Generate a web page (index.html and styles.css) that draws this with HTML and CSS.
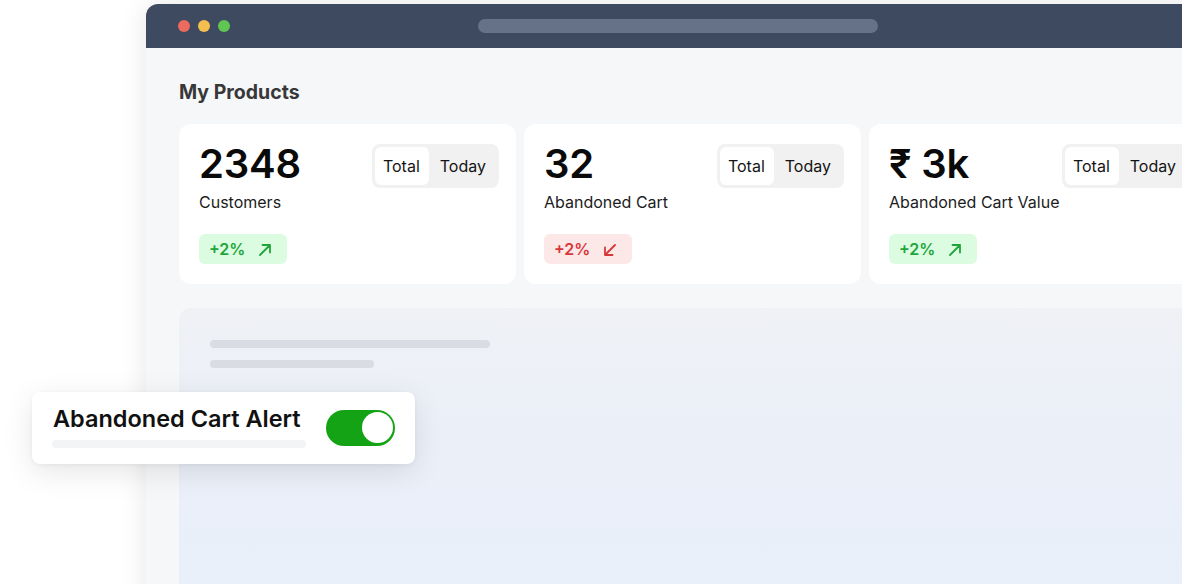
FILE: index.html
```html
<!DOCTYPE html>
<html lang="en">
<head>
<meta charset="utf-8">
<title>My Products</title>
<link rel="stylesheet" href="styles.css">
</head>
<body>
<div class="stage">
  <div class="window">
    <div class="titlebar">
      <div class="dots">
        <span class="dot dot-red"></span>
        <span class="dot dot-yellow"></span>
        <span class="dot dot-green"></span>
      </div>
      <div class="urlbar"></div>
      <div></div>
    </div>
    <div class="content">
      <h1 class="heading">My Products</h1>
      <div class="cards">
        <div class="card">
          <div class="card-top">
            <div class="value">2348</div>
            <div class="switch-group">
              <span class="seg seg-active">Total</span>
              <span class="seg">Today</span>
            </div>
          </div>
          <div class="label">Customers</div>
          <span class="badge badge-up">+2%
            <svg width="14" height="14" viewBox="0 0 14 14" fill="none" stroke="currentColor" stroke-width="1.8" stroke-linecap="round" stroke-linejoin="round"><path d="M2 12L12 2M4.5 2H12v7.5"/></svg>
          </span>
        </div>
        <div class="card">
          <div class="card-top">
            <div class="value">32</div>
            <div class="switch-group">
              <span class="seg seg-active">Total</span>
              <span class="seg">Today</span>
            </div>
          </div>
          <div class="label">Abandoned Cart</div>
          <span class="badge badge-down">+2%
            <svg width="14" height="14" viewBox="0 0 14 14" fill="none" stroke="currentColor" stroke-width="1.8" stroke-linecap="round" stroke-linejoin="round"><path d="M12 2L2 12M2 4.5V12h7.5"/></svg>
          </span>
        </div>
        <div class="card">
          <div class="card-top">
            <div class="value">₹ 3k</div>
            <div class="switch-group">
              <span class="seg seg-active">Total</span>
              <span class="seg">Today</span>
            </div>
          </div>
          <div class="label">Abandoned Cart Value</div>
          <span class="badge badge-up">+2%
            <svg width="14" height="14" viewBox="0 0 14 14" fill="none" stroke="currentColor" stroke-width="1.8" stroke-linecap="round" stroke-linejoin="round"><path d="M2 12L12 2M4.5 2H12v7.5"/></svg>
          </span>
        </div>
      </div>
      <div class="panel">
        <div class="skeleton skeleton-long"></div>
        <div class="skeleton skeleton-short"></div>
      </div>
    </div>
  </div>

  <div class="alert-card">
    <div class="alert-text">
      <div class="alert-title">Abandoned Cart Alert</div>
      <div class="alert-bar"></div>
    </div>
    <div class="toggle"><span class="knob"></span></div>
  </div>
</div>
</body>
</html>
```

FILE: styles.css
```css
* {
  box-sizing: border-box;
}

html, body {
  margin: 0;
  padding: 0;
  background: #ffffff;
  overflow: hidden;
}

body {
  width: 1182px;
  height: 584px;
  font-family: "Inter", "Noto Sans", sans-serif;
}

.stage {
  position: relative;
  width: 1182px;
  height: 584px;
  padding: 4px 0 0 146px;
  overflow: hidden;
}

/* browser window */
.window {
  width: 1120px;
  height: 640px;
  border-radius: 12px;
  overflow: hidden;
  background: #f6f7f9;
  box-shadow: 0 0 28px rgba(0, 0, 0, 0.10);
}

.titlebar {
  height: 44px;
  background: #3e4a5f;
  display: grid;
  grid-template-columns: 300px 400px 1fr;
  align-items: center;
  padding: 0 32px;
}

.dots {
  display: flex;
  gap: 8px;
}

.dot {
  width: 12px;
  height: 12px;
  border-radius: 50%;
}

.dot-red { background: #ec6a5e; }
.dot-yellow { background: #f4bf4f; }
.dot-green { background: #61c554; }

.urlbar {
  height: 14px;
  border-radius: 7px;
  background: #667287;
}

.content {
  padding: 32px 0 0 33px;
}

.heading {
  margin: 0;
  font-size: 19.5px;
  line-height: 24px;
  font-weight: 700;
  color: #383838;
}

.cards {
  margin-top: 20px;
  display: grid;
  grid-template-columns: repeat(3, 337px);
  gap: 8px;
}

.card {
  background: #ffffff;
  border-radius: 12px;
  padding: 20px 17px 20px 20px;
  display: flex;
  flex-direction: column;
  align-items: flex-start;
  height: 160px;
}

.card-top {
  align-self: stretch;
  display: flex;
  justify-content: space-between;
  align-items: flex-start;
  height: 40px;
}

.value {
  font-size: 40px;
  line-height: 40px;
  font-weight: 600;
  color: #0a0a0a;
  letter-spacing: -0.2px;
}

.switch-group {
  display: flex;
  padding: 3px;
  background: #f1f1f1;
  border-radius: 8px;
  height: 44px;
}

.seg {
  display: flex;
  align-items: center;
  padding: 0 10px 0 11px;
  font-size: 16px;
  color: #141414;
  border-radius: 6px;
}

.seg-active {
  background: #ffffff;
  padding: 0 9px 0 8px;
}

.label {
  margin-top: 8px;
  font-size: 16px;
  line-height: 20px;
  color: #1c1c1c;
}

.badge {
  margin-top: 22px;
  height: 30px;
  width: 88px;
  border-radius: 6px;
  display: flex;
  align-items: center;
  gap: 13px;
  padding-left: 10px;
  font-size: 16px;
  font-weight: 600;
}

.badge svg {
  margin-top: 1px;
}

.badge-up {
  background: #dcfce2;
  color: #21a53b;
}

.badge-down {
  background: #fde8e8;
  color: #d8373a;
}

/* lower content area */
.panel {
  margin-top: 24px;
  height: 320px;
  border-radius: 12px 0 0 0;
  background: linear-gradient(180deg, #eff1f5 0%, #ebeff8 40%, #e8f0fb 100%);
  padding: 32px 31px;
}

.skeleton {
  height: 8px;
  border-radius: 4px;
  background: #d9dce2;
}

.skeleton-long { width: 280px; }

.skeleton-short {
  width: 164px;
  margin-top: 12px;
}

/* floating alert card */
.alert-card {
  position: absolute;
  left: 32px;
  top: 392px;
  width: 383px;
  height: 72px;
  background: #ffffff;
  border-radius: 8px;
  padding: 13px 20px 16px 20px;
  display: flex;
  align-items: center;
  gap: 20px;
  box-shadow: 0 8px 30px rgba(0, 0, 0, 0.10), 0 1px 4px rgba(0, 0, 0, 0.05);
}

.alert-text {
  width: 254px;
  align-self: flex-start;
}

.alert-title {
  font-size: 23.5px;
  line-height: 28px;
  font-weight: 600;
  color: #111111;
  padding-left: 1px;
  white-space: nowrap;
}

.alert-bar {
  margin-top: 7px;
  height: 8px;
  border-radius: 4px;
  background: #f3f4f5;
}

.toggle {
  width: 69px;
  height: 36px;
  border-radius: 18px;
  background: #14a314;
  display: flex;
  align-items: center;
  justify-content: flex-end;
  padding: 0 2px;
  margin-top: 2px;
}

.knob {
  width: 31px;
  height: 31px;
  border-radius: 50%;
  background: #ffffff;
}
```
